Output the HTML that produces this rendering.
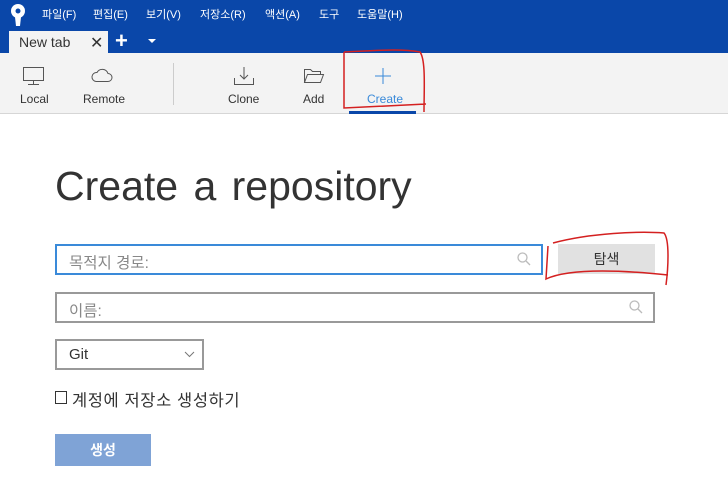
<!DOCTYPE html>
<html><head><meta charset="utf-8"><style>
*{margin:0;padding:0;box-sizing:border-box}
body{width:728px;height:493px;background:#fff;font-family:"Liberation Sans","Noto Sans CJK KR",sans-serif;position:relative;overflow:hidden}
.abs{position:absolute}
.hdr{left:0;top:0;width:728px;height:53px;background:#0a47a9}
.menu{top:6px;color:#fff;font-size:11px}
.tb{left:0;top:53px;width:728px;height:61px;background:#f3f3f3;border-bottom:1px solid #d6d6d6}
.lbl{font-size:12px;color:#333;top:92px}
.inp{border:2px solid #999;height:31px;background:#fff;color:#888;font-size:15.5px;padding:5px 12px}
</style></head><body>
<div class="abs hdr"></div>
<svg class="abs" style="left:9px;top:3px" width="18" height="24" viewBox="0 0 18 24"><circle cx="9" cy="8" r="7" fill="#fff"/><circle cx="9" cy="8" r="2.5" fill="#0a47a9"/><path d="M6 14 L7 23 L11 23 L12 14Z" fill="#fff"/></svg>
<div class="abs menu" style="left:42px">파일(F)</div>
<div class="abs menu" style="left:93px">편집(E)</div>
<div class="abs menu" style="left:146px">보기(V)</div>
<div class="abs menu" style="left:200px">저장소(R)</div>
<div class="abs menu" style="left:265px">액션(A)</div>
<div class="abs menu" style="left:319px">도구</div>
<div class="abs menu" style="left:357px">도움말(H)</div>
<div class="abs" style="left:9px;top:31px;width:99px;height:22px;background:#f3f3f3"></div>
<div class="abs" style="left:19px;top:34px;font-size:14px;color:#333">New tab</div>
<div class="abs" style="left:90px;top:33px;font-size:16px;color:#333">✕</div>
<div class="abs" style="left:115px;top:28px;font-size:22px;color:#fff;font-weight:bold">+</div>
<div class="abs" style="left:148px;top:39px;width:0;height:0;border-left:4px solid transparent;border-right:4px solid transparent;border-top:4px solid #fff"></div>
<div class="abs tb"></div>
<svg class="abs" style="left:22px;top:66px" width="24" height="20" fill="none" stroke="#555" stroke-width="1"><rect x="1.5" y="1.5" width="20" height="13"/><path d="M6 18.5h11M11.5 14.5v4"/></svg>
<svg class="abs" style="left:91px;top:68px" width="22" height="15" fill="none" stroke="#555"><path d="M5 13.5h12a4 4 0 0 0 0-8 6 6 0 0 0-11-1 4.5 4.5 0 0 0-1 9z"/></svg>
<div class="abs" style="left:173px;top:63px;width:1px;height:42px;background:#ccc"></div>
<svg class="abs" style="left:233px;top:66px" width="22" height="20" fill="none" stroke="#555"><path d="M11 1v12M7 9l4 4 4-4M1.5 12v6.5h19V12"/></svg>
<svg class="abs" style="left:303px;top:68px" width="22" height="16" fill="none" stroke="#555"><path d="M1.5 14.5V1.5h6l2 2h8v3M1.5 14.5l3-8h16l-3 8z"/></svg>
<svg class="abs" style="left:375px;top:68px" width="16" height="16" stroke="#3a8ad9"><path d="M8 0v16M0 8h16"/></svg>
<div class="abs lbl" style="left:20px">Local</div>
<div class="abs lbl" style="left:83px">Remote</div>
<div class="abs lbl" style="left:228px">Clone</div>
<div class="abs lbl" style="left:303px">Add</div>
<div class="abs lbl" style="left:367px;color:#3a8ad9">Create</div>
<div class="abs" style="left:349px;top:111px;width:67px;height:3px;background:#0a47a9"></div>
<div class="abs" style="left:55px;top:163px;font-size:41px;color:#333;word-spacing:4px">Create a repository</div>
<div class="abs inp" style="left:55px;top:244px;width:488px;border-color:#3a8ad9">목적지 경로:</div>
<div class="abs" style="left:558px;top:244px;width:97px;height:30px;background:#e1e1e1;font-size:14px;color:#333;text-align:center;line-height:30px">탐색</div>
<div class="abs inp" style="left:55px;top:292px;width:600px">이름:</div>
<svg class="abs" style="left:517px;top:252px" width="14" height="14" fill="none" stroke="#bbb" stroke-width="1.3"><circle cx="5.5" cy="5.5" r="4.5"/><path d="M9 9l4 4"/></svg>
<svg class="abs" style="left:629px;top:300px" width="14" height="14" fill="none" stroke="#bbb" stroke-width="1.3"><circle cx="5.5" cy="5.5" r="4.5"/><path d="M9 9l4 4"/></svg>
<div class="abs inp" style="left:55px;top:339px;width:149px;color:#333;font-size:15px">Git</div>
<svg class="abs" style="left:184px;top:351px" width="11" height="7" fill="none" stroke="#777"><path d="M1 1l4.5 4.5L10 1"/></svg>
<div class="abs" style="left:55px;top:391px;width:12px;height:13px;border:1px solid #333"></div>
<div class="abs" style="left:72px;top:387px;font-size:16.5px;color:#333;letter-spacing:0.6px">계정에 저장소 생성하기</div>
<div class="abs" style="left:55px;top:434px;width:96px;height:32px;background:#7fa3d6;color:#fff;font-size:14px;text-align:center;line-height:32px;font-weight:bold">생성</div>
<svg class="abs" style="left:0;top:0" width="728" height="493" fill="none" stroke="#d42020" stroke-width="1.5">
<path d="M344 52 L344 108 L426 104 M344 52 C370 51 400 48 420 52 C426 60 424 90 424 112"/>
<path d="M548 246 L546 279 C570 268 620 270 668 275 M553 243 C590 233 640 231 664 233 C670 240 668 270 666 285"/>
</svg>
</body></html>
